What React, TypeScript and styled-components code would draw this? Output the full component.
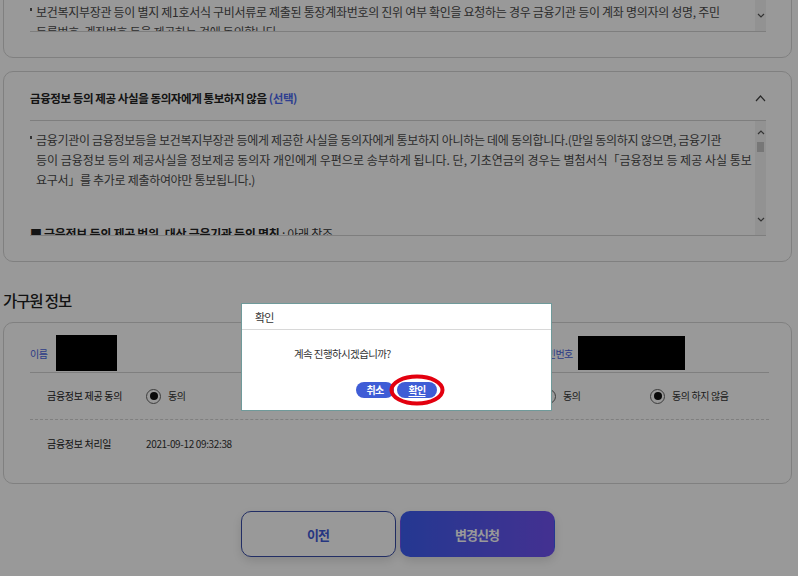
import React from 'react';
import styled, { createGlobalStyle } from 'styled-components';

const GlobalStyle = createGlobalStyle`
  html, body {
    margin: 0;
    padding: 0;
  }
  body {
    background: #ffffff;
    font-family: 'Noto Sans CJK KR', 'Noto Sans', sans-serif;
    color: #333;
    overflow: hidden;
  }
  * {
    box-sizing: border-box;
  }
`;

const Screen = styled.div`
  position: relative;
  width: 798px;
  height: 576px;
  overflow: hidden;
`;

const Page = styled.div`
  display: flex;
  flex-direction: column;
  padding: 0 6px 0 3px;
`;

const Card = styled.section<{ $offsetTop: number }>`
  margin-top: ${(p) => p.$offsetTop}px;
  border: 1px solid #d6d6d6;
  border-radius: 10px;
  background: #fff;
  padding: 0 25px 25px 26px;
`;

const TermsHeader = styled.div`
  display: flex;
  justify-content: space-between;
  align-items: center;
  padding: 17px 0 13px;
  font-size: 11.5px;
  line-height: 18px;
  font-weight: 700;
  letter-spacing: -0.42px;
  color: #222;
`;

const Optional = styled.span`
  color: #4d6af0;
`;

const ScrollBox = styled.div<{ $height: number }>`
  display: flex;
  height: ${(p) => p.$height}px;
  border-top: 1px solid #d2d2d2;
  border-bottom: 1px solid #d2d2d2;
  background: #fff;
`;

const TextArea = styled.div<{ $padTop: number }>`
  flex: 1;
  overflow: hidden;
  padding-top: ${(p) => p.$padTop}px;
  font-size: 12px;
  line-height: 20px;
  letter-spacing: -0.3px;
  color: #4a4a4a;
  white-space: nowrap;
`;

const Bullet = styled.p`
  position: relative;
  margin: 0;
  padding-left: 6px;

  &::before {
    content: '';
    position: absolute;
    left: 0;
    top: 6px;
    width: 2px;
    height: 3px;
    background: #555;
  }
`;

const WideLine = styled.span`
  letter-spacing: 0;
`;

const ScopeLine = styled.p`
  margin: 34px 0 0;
  color: #333;

  b {
    font-weight: 700;
    color: #222;
  }
`;

const Scrollbar = styled.div`
  width: 11px;
  display: flex;
  flex-direction: column;
  background: #f3f3f3;
`;

const ArrowCell = styled.div<{ $height: number; $padTop: number }>`
  height: ${(p) => p.$height}px;
  padding-top: ${(p) => p.$padTop}px;
  display: flex;
  justify-content: center;
  align-items: flex-start;
`;

const Thumb = styled.div`
  margin: 1px 2px 0;
  height: 10px;
  background: #c6c6c6;
`;

const Spacer = styled.div`
  flex: 1;
`;

const SectionTitle = styled.h2`
  margin: 28px 0 12px;
  font-size: 15.5px;
  line-height: 20px;
  font-weight: 500;
  letter-spacing: -1.1px;
  color: #1e1e1e;
`;

const InfoCard = styled.section`
  border: 1px solid #d6d6d6;
  border-radius: 10px;
  background: #fff;
  padding: 0 22px 15px 26px;
`;

const InfoRow = styled.div<{ $cols: number; $height: number; $line: 'solid' | 'dashed' | 'none'; $pad?: string }>`
  display: grid;
  grid-template-columns: ${(p) => p.$cols}px 1fr;
  align-items: center;
  height: ${(p) => p.$height}px;
  padding: ${(p) => p.$pad ?? '0'};
  border-bottom: ${(p) => (p.$line === 'none' ? '0' : `1px ${p.$line} #d4d4d4`)};
`;

const Cell = styled.div<{ $indent?: number }>`
  display: flex;
  align-items: center;
  padding-left: ${(p) => p.$indent ?? 0}px;
`;

const NameLabel = styled.span<{ $width: number }>`
  width: ${(p) => p.$width}px;
  font-size: 10px;
  letter-spacing: -0.5px;
  color: #4a64e0;
  white-space: nowrap;
`;

const Redacted = styled.div<{ $w: number; $h: number }>`
  width: ${(p) => p.$w}px;
  height: ${(p) => p.$h}px;
  background: #000;
`;

const FieldLabel = styled.span`
  width: 99px;
  font-size: 10px;
  line-height: 16px;
  letter-spacing: -0.3px;
  color: #222;
  white-space: nowrap;
`;

const FieldValue = styled.span`
  font-size: 10px;
  line-height: 16px;
  letter-spacing: -0.35px;
  color: #333;
`;

const Option = styled.label`
  display: flex;
  align-items: center;
  gap: 7px;
  min-width: 109px;
  font-size: 10px;
  line-height: 16px;
  letter-spacing: -0.4px;
  color: #333;
`;

const Radio = styled.span<{ $checked: boolean }>`
  width: 15px;
  height: 15px;
  border-radius: 50%;
  border: 1px solid #666;
  display: grid;
  place-items: center;
  background: #fff;

  &::after {
    content: '';
    width: 8px;
    height: 8px;
    border-radius: 50%;
    background: ${(p) => (p.$checked ? '#111' : 'transparent')};
  }
`;

const Actions = styled.div`
  display: flex;
  justify-content: center;
  gap: 4px;
  margin-top: 27px;
`;

const ActionButton = styled.button<{ $primary?: boolean }>`
  width: 155px;
  height: 46px;
  border-radius: 10px;
  font-family: inherit;
  font-size: 13px;
  font-weight: 700;
  letter-spacing: -1px;
  cursor: pointer;
  box-shadow: 0 4px 10px rgba(0, 0, 0, 0.12);
  border: 1px solid ${(p) => (p.$primary ? 'transparent' : '#3a4ea8')};
  background: ${(p) => (p.$primary ? 'linear-gradient(90deg, #3d5ef2 0%, #7152f2 100%)' : '#fff')};
  color: ${(p) => (p.$primary ? '#fff' : '#3f5bd8')};
`;

const Overlay = styled.div`
  position: absolute;
  inset: 0;
  background: rgba(0, 0, 0, 0.4);
  z-index: 10;
`;

const Dialog = styled.div`
  position: absolute;
  left: 241px;
  top: 303px;
  width: 311px;
  height: 108px;
  border: 1px solid #6f9a9a;
  background: #fff;
  z-index: 20;
  display: flex;
  flex-direction: column;
`;

const DialogTitle = styled.div`
  height: 26px;
  padding-left: 13px;
  display: flex;
  align-items: center;
  border-bottom: 1px solid #d8d8d8;
  font-size: 11px;
  letter-spacing: -0.8px;
  color: #333;
`;

const DialogMessage = styled.p`
  margin: 16px 0 0;
  padding-left: 52px;
  font-size: 10.5px;
  line-height: 16px;
  letter-spacing: -0.6px;
  color: #333;
`;

const DialogButtons = styled.div`
  display: flex;
  justify-content: center;
  gap: 3px;
  margin-top: 20px;
`;

const PillButton = styled.button<{ $width: number; $focused?: boolean }>`
  position: relative;
  width: ${(p) => p.$width}px;
  height: 16px;
  padding: 0;
  border: 0;
  border-radius: 8px;
  background: #3f5dd6;
  font-family: inherit;
  font-size: 10px;
  font-weight: 700;
  letter-spacing: -0.7px;
  line-height: 16px;
  color: #fff;
  text-decoration: ${(p) => (p.$focused ? 'underline' : 'none')};
  text-underline-offset: 2px;
`;

const Annotation = styled.svg`
  position: absolute;
  left: -8px;
  top: -8px;
  pointer-events: none;
`;

const Chevron: React.FC<{ up?: boolean; w: number; h: number; color?: string }> = ({ up, w, h, color = '#555' }) => (
  <svg width={w} height={h} viewBox={`0 0 ${w} ${h}`} fill="none">
    <polyline
      points={up ? `1,${h - 1} ${w / 2},1 ${w - 1},${h - 1}` : `1,1 ${w / 2},${h - 1} ${w - 1},1`}
      stroke={color}
      strokeWidth="1.2"
    />
  </svg>
);

const App: React.FC = () => {
  return (
    <Screen>
      <GlobalStyle />
      <Page>
        <Card $offsetTop={-30}>
          <ScrollBox $height={61}>
            <TextArea $padTop={30}>
              <Bullet>
                보건복지부장관 등이 별지 제1호서식 구비서류로 제출된 통장계좌번호의 진위 여부 확인을 요청하는 경우 금융기관 등이 계좌 명의자의 성명, 주민
                <br />
                등록번호, 계좌번호 등을 제공하는 것에 동의합니다.
              </Bullet>
            </TextArea>
            <Scrollbar>
              <Spacer />
              <ArrowCell $height={18} $padTop={0}>
                <Chevron w={8} h={5} />
              </ArrowCell>
            </Scrollbar>
          </ScrollBox>
        </Card>

        <Card $offsetTop={13}>
          <TermsHeader>
            <span>
              금융정보 등의 제공 사실을 동의자에게 통보하지 않음 <Optional>(선택)</Optional>
            </span>
            <Chevron up w={11} h={7} color="#444" />
          </TermsHeader>
          <ScrollBox $height={116}>
            <TextArea $padTop={9}>
              <Bullet>
                금융기관이 금융정보등을 보건복지부장관 등에게 제공한 사실을 동의자에게 통보하지 아니하는 데에 동의합니다.(만일 동의하지 않으면, 금융기관
                <br />
                <WideLine>
                  등이 금융정보 등의 제공사실을 정보제공 동의자 개인에게 우편으로 송부하게 됩니다. 단, 기초연금의 경우는 별첨서식「금융정보 등 제공 사실 통보
                </WideLine>
                <br />
                요구서」를 추가로 제출하여야만 통보됩니다.)
              </Bullet>
              <ScopeLine>
                <b>■ 금융정보 등의 제공 범위, 대상 금융기관 등의 명칭</b> : 아래 참조
              </ScopeLine>
            </TextArea>
            <Scrollbar>
              <ArrowCell $height={20} $padTop={9}>
                <Chevron up w={8} h={5} />
              </ArrowCell>
              <Thumb />
              <Spacer />
              <ArrowCell $height={18} $padTop={0}>
                <Chevron w={8} h={5} />
              </ArrowCell>
            </Scrollbar>
          </ScrollBox>
        </Card>

        <SectionTitle>가구원 정보</SectionTitle>

        <InfoCard>
          <InfoRow $cols={508} $height={50} $line="solid" $pad="12px 0 1px">
            <Cell>
              <NameLabel $width={26}>이름</NameLabel>
              <Redacted $w={61} $h={36} />
            </Cell>
            <Cell>
              <NameLabel $width={40}>주민번호</NameLabel>
              <Redacted $w={107} $h={34} />
            </Cell>
          </InfoRow>
          <InfoRow $cols={395} $height={47} $line="dashed">
            <Cell $indent={17}>
              <FieldLabel>금융정보 제공 동의</FieldLabel>
              <Option>
                <Radio $checked />
                동의
              </Option>
              <Option>
                <Radio $checked={false} />
                동의 하지 않음
              </Option>
            </Cell>
            <Cell $indent={17}>
              <FieldLabel>금융정보 제공 동의</FieldLabel>
              <Option>
                <Radio $checked={false} />
                동의
              </Option>
              <Option>
                <Radio $checked />
                동의 하지 않음
              </Option>
            </Cell>
          </InfoRow>
          <InfoRow $cols={395} $height={48} $line="none">
            <Cell $indent={17}>
              <FieldLabel>금융정보 처리일</FieldLabel>
              <FieldValue>2021-09-12 09:32:38</FieldValue>
            </Cell>
            <Cell />
          </InfoRow>
        </InfoCard>

        <Actions>
          <ActionButton>이전</ActionButton>
          <ActionButton $primary>변경신청</ActionButton>
        </Actions>
      </Page>

      <Overlay />

      <Dialog role="dialog">
        <DialogTitle>확인</DialogTitle>
        <DialogMessage>계속 진행하시겠습니까?</DialogMessage>
        <DialogButtons>
          <PillButton $width={38}>취소</PillButton>
          <PillButton $width={40} $focused>
            확인
            <Annotation width="56" height="32" viewBox="0 0 56 32">
              <ellipse cx="28" cy="16" rx="25.5" ry="13.5" fill="none" stroke="#e3000f" strokeWidth="4" />
            </Annotation>
          </PillButton>
        </DialogButtons>
      </Dialog>
    </Screen>
  );
};

export default App;
